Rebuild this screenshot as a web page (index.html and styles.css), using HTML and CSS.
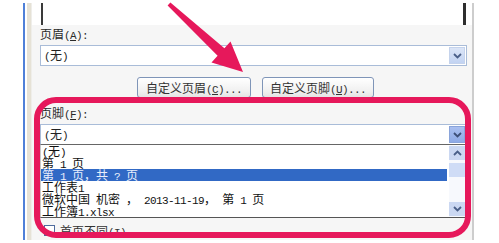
FILE: index.html
```html
<!DOCTYPE html>
<html lang="zh-CN">
<head>
  <meta charset="UTF-8" />
  <title>页面设置 - 页眉/页脚</title>
  <link rel="stylesheet" href="styles.css">
</head>
<body>
  <div class="screen">
    <div class="dialog">
      <div class="rail"></div>
      <div class="body">
        <div class="top-band">
          <div class="preview"></div>
        </div>

        <div class="label label-header">页眉<span class="l">(<u>A</u>):</span></div>
        <div class="combo">
          <span class="value"><span class="l">(</span>无<span class="l">)</span></span>
          <span class="drop">
            <svg width="9" height="6" viewBox="0 0 9 6"><path d="M1 1 L4.5 4.5 L8 1" fill="none" stroke="#4a5f88" stroke-width="1.8"/></svg>
          </span>
        </div>

        <div class="buttons">
          <button class="btn btn-header">自定义页眉<span class="l">(<u>C</u>)...</span></button>
          <button class="btn btn-footer">自定义页脚<span class="l">(<u>U</u>)...</span></button>
        </div>

        <div class="label label-footer">页脚<span class="l">(<u>F</u>):</span></div>
        <div class="combo combo-open">
          <span class="value"><span class="l">(</span>无<span class="l">)</span></span>
          <span class="drop drop-active">
            <svg width="9" height="6" viewBox="0 0 9 6"><path d="M1 1 L4.5 4.5 L8 1" fill="none" stroke="#3d4f78" stroke-width="1.8"/></svg>
          </span>
        </div>
        <div class="list">
          <ul class="items">
            <li><span class="l">(</span>无<span class="l">)</span></li>
            <li>第<span class="l"> 1 </span>页</li>
            <li class="selected">第<span class="l"> 1 </span>页，共<span class="l"> ? </span>页</li>
            <li>工作表<span class="l">1</span></li>
            <li>微软中国<span class="l"> </span>机密<span class="l"> </span>，<span class="l"> 2013-11-19</span>，<span class="l"> </span>第<span class="l"> 1 </span>页</li>
            <li>工作簿<span class="l">1.xlsx</span></li>
          </ul>
          <div class="scrollbar">
            <span class="sb-btn">
              <svg width="9" height="6" viewBox="0 0 9 6"><path d="M1 5 L4.5 1.5 L8 5" fill="none" stroke="#4a5f88" stroke-width="1.8"/></svg>
            </span>
            <span class="sb-thumb"></span>
            <span class="sb-track"></span>
            <span class="sb-btn">
              <svg width="9" height="6" viewBox="0 0 9 6"><path d="M1 1 L4.5 4.5 L8 1" fill="none" stroke="#4a5f88" stroke-width="1.8"/></svg>
            </span>
          </div>
        </div>

        <div class="check">
          <span class="box"></span>
          <span>首页不同<span class="l">(<u>I</u>)</span></span>
        </div>
      </div>
    </div>

    <!-- red annotation drawn over the screenshot -->
    <svg class="annot" width="499" height="243" viewBox="0 0 499 243">
      <polygon points="170.4,2.5 224.4,48.3 230.5,41.6 243,72 211.5,62.4 217.6,55.7 167.6,5.5" fill="#e6185b"/>
      <rect x="37" y="100" width="431" height="135" rx="19" ry="19" fill="none" stroke="#e6185b" stroke-width="6"/>
    </svg>
  </div>
</body>
</html>
```

FILE: styles.css
```css
body {
  margin: 0;
  background: #fff;
  font-family: "Noto Sans CJK SC", "Liberation Sans", sans-serif;
  font-size: 12px;
  color: #222;
}

/* half-width latin runs, SimSun style: 6px per char */
.l {
  font-family: "Liberation Mono", monospace;
  font-size: 11px;
  letter-spacing: -0.6px;
}

.screen {
  position: relative;
  width: 499px;
  height: 243px;
  overflow: hidden;
  background: #fff;
}

.dialog {
  display: flex;
  margin: 3px 0 0 23px;
  width: 447px;
  height: 237px;
  border-left: 2px solid #4f80d8;
  border-right: 2px solid #cdcdcd;
}

.rail {
  width: 7px;
  background: linear-gradient(to right, #fff 0 2px, #e6e2d6 2px 6px, #efeeea 6px);
}

.body {
  flex: 1;
  padding: 0 5px 0 8px;
  background: #f6f6f6;
}

.top-band {
  height: 22px;
  margin: 0 -5px 0 -8px;
  padding: 0 6px 0 9px;
  background: #fff;
}

.preview {
  height: 100%;
  border-left: 2px solid #3a3a3a;
  border-right: 3px solid #2e2e2e;
  background: #fff;
}

.label {
  height: 12px;
  line-height: 12px;
  color: #2a2a2a;
}

.label-header {
  margin-top: 3px;
}

.label-footer {
  margin-top: 9px;
}

.combo {
  display: flex;
  align-items: center;
  justify-content: space-between;
  height: 19px;
  margin-top: 5px;
  border: 1px solid #a9bcd8;
  background: #fff;
}

.combo .value {
  padding-left: 3px;
  line-height: 19px;
}

.drop {
  display: flex;
  align-items: center;
  justify-content: center;
  width: 16px;
  height: 17px;
  margin-right: 1px;
  background: linear-gradient(#dbe5f7, #c2d3f2);
  border: 1px solid #c5d3ec;
  box-sizing: border-box;
}

.drop-active {
  background: linear-gradient(#a9bff0, #8eaae6);
  border-color: #8aa4da;
}

.combo-open {
  border-bottom-color: #666;
}

.buttons {
  display: flex;
  justify-content: center;
  gap: 11px;
  margin-top: 11px;
  padding-left: 4px;
}

.btn {
  height: 21px;
  padding: 0;
  font-family: inherit;
  font-size: 12px;
  line-height: 19px;
  color: #333;
  background: linear-gradient(#fff, #f0f0f0 70%, #e4e4e4);
  border: 1px solid #7f95b8;
  border-radius: 3px;
}

.btn-header {
  width: 114px;
}

.btn-footer {
  width: 112px;
}

.list {
  display: flex;
  height: 72px;
  border: 1px solid #555;
  border-top: none;
  border-left-color: #c8c8c8;
  background: #fff;
}

.items {
  flex: 1;
  margin: 0;
  padding: 0;
  list-style: none;
}

.items li {
  height: 12px;
  line-height: 12px;
  padding-left: 1px;
  margin-right: 2px;
  white-space: nowrap;
  color: #111;
}

.items li.selected {
  background: #3169c5;
  color: #e8eefc;
}

.scrollbar {
  display: flex;
  flex-direction: column;
  width: 17px;
  padding: 1px 0;
  background: #f7f9fd;
}

.sb-btn {
  display: flex;
  align-items: center;
  justify-content: center;
  height: 14px;
  background: #cbd8f2;
}

.sb-thumb {
  height: 14px;
  margin-top: 3px;
  background: #cfdcf6;
}

.sb-track {
  flex: 1;
}

.check {
  display: flex;
  align-items: center;
  gap: 5px;
  margin-top: 4px;
  padding-left: 4px;
  color: #333;
}

.check .box {
  width: 9px;
  height: 9px;
  border: 1px solid #4f6c9e;
  background: #fff;
}

.annot {
  position: absolute;
  left: 0;
  top: 0;
  pointer-events: none;
}
```
